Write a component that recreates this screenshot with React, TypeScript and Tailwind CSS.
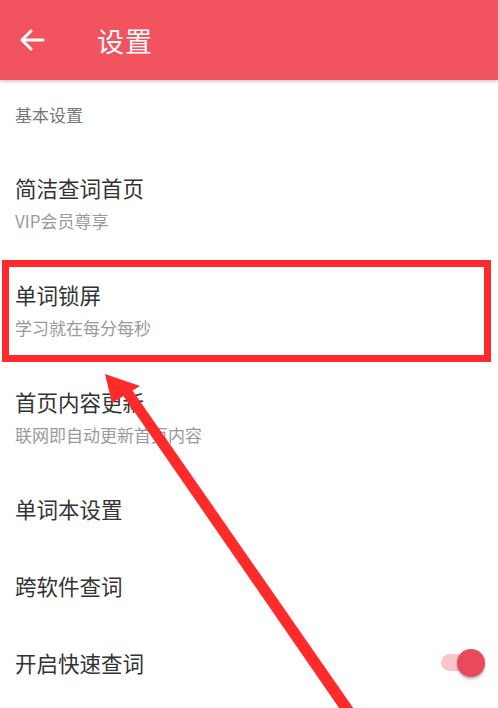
import React from "react";

const font = { fontFamily: '"Noto Sans CJK SC", "Noto Sans", sans-serif' };

function Item({ title, sub }: { title: string; sub?: string }) {
  return (
    <div className={sub ? "h-[107px] flex flex-col justify-center pl-[15px]" : "h-[77px] flex items-center pl-[15px]"}>
      <div className="text-[21.5px] leading-[28px] text-[#333333]">{title}</div>
      {sub && <div className="text-[17px] leading-[22px] text-[#9a9a9a] mt-[8px]">{sub}</div>}
    </div>
  );
}

export default function App() {
  return (
    <div className="relative w-[498px] h-[708px] overflow-hidden bg-white" style={font}>
      <div className="h-[80px] bg-[#f1535f] flex items-center shadow-[0_2px_3px_rgba(0,0,0,0.18)] relative z-10">
        <svg width="26" height="24" viewBox="0 0 26 24" className="ml-[19px]">
          <path d="M24 12H3M12 3L3 12L12 21" fill="none" stroke="white" strokeWidth="3" strokeLinecap="round" strokeLinejoin="round" />
        </svg>
        <div className="ml-[52px] text-[27px] text-white leading-none tracking-[1px]">设置</div>
      </div>
      <div className="h-[69px] flex items-center pl-[15px] text-[17px] text-[#777777]">基本设置</div>
      <Item title="简洁查词首页" sub="VIP会员尊享" />
      <Item title="单词锁屏" sub="学习就在每分每秒" />
      <Item title="首页内容更新" sub="联网即自动更新首页内容" />
      <Item title="单词本设置" />
      <Item title="跨软件查词" />
      <div className="h-[77px] flex items-center justify-between pl-[15px] pr-[13px]">
        <div className="text-[21.5px] leading-[28px] text-[#333333]">开启快速查词</div>
        <div className="relative w-[46px] h-[28px] flex items-center">
          <div className="w-[34px] h-[17px] rounded-full bg-[#f8c6cc] ml-[2px]" />
          <div className="absolute right-0 top-0 w-[28px] h-[28px] rounded-full bg-[#e84a5a] shadow-[0_2px_3px_rgba(0,0,0,0.3)]" />
        </div>
      </div>

      {/* annotation box */}
      <div className="absolute left-[2px] top-[260px] w-[489px] h-[102px] border-[7px] border-[#ff2a2a] pointer-events-none" />
      {/* annotation arrow */}
      <svg className="absolute left-0 top-0 pointer-events-none" width="498" height="708" viewBox="0 0 498 708">
        <polygon points="118,388 128,384 356,712 346,718" fill="#ff2a2a" />
        <polygon points="105,374 140,386 112,403" fill="#ff2a2a" />
      </svg>
    </div>
  );
}
